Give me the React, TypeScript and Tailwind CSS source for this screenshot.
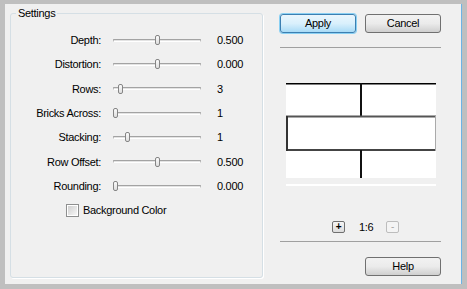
const FONT = "font-['Liberation_Sans',Arial,sans-serif] text-[11px] tracking-[-0.3px] text-black";

// pos = thumb centre, px from the track's left edge
const SETTINGS = [
  {label: 'Depth:', value: '0.500', pos: 44},
  {label: 'Distortion:', value: '0.000', pos: 44},
  {label: 'Rows:', value: '3', pos: 7},
  {label: 'Bricks Across:', value: '1', pos: 2},
  {label: 'Stacking:', value: '1', pos: 14},
  {label: 'Row Offset:', value: '0.500', pos: 44},
  {label: 'Rounding:', value: '0.000', pos: 2},
];

function Slider({pos}: {pos: number}) {
  return (
    <div className="relative w-[88px] h-[12px] flex items-center">
      <div className="w-full h-[3px] border-t border-[#a3a3a3] border-b border-b-[#ffffff] bg-[#e3e3e3] border-x border-x-[#b9b9b9]" />
      <div
        className="absolute top-[1px] w-[5px] h-[10px] rounded-[2px] border border-[#858585] bg-gradient-to-b from-[#fbfbfb] to-[#dedede]"
        style={{left: pos - 2}}
      />
    </div>
  );
}

function Button({label, primary}: {label: string; primary?: boolean}) {
  return (
    <button
      className={
        primary
          ? 'w-[76px] h-[19px] rounded-[3px] border border-[#3c7fb1] shadow-[0_0_0_1px_#8ad0f3] bg-gradient-to-b from-[#eaf6fd] via-[#d9f0fc] to-[#a9dbf6] leading-[17px] text-center'
          : 'w-[76px] h-[19px] rounded-[3px] border border-[#707070] bg-gradient-to-b from-[#f2f2f2] via-[#ebebeb] to-[#cfcfcf] leading-[17px] text-center'
      }
    >
      {label}
    </button>
  );
}

export default function App() {
  return (
    <div className={`w-[467px] h-[289px] bg-[#bfbfbf] pt-[4px] pl-[5px] ${FONT}`}>
      <div className="w-[457px] h-[280px] bg-[#f0f0f0] border-r border-[#6cb3e6] flex items-start">

        {/* ── Settings group ─────────────────────────── */}
        <fieldset className="ml-[5px] mt-[3px] w-[253px] h-[271px] border border-[#d5dfe5] rounded-[3px] shadow-[1px_1px_0_#ffffff]">
          <legend className="ml-[5px] px-[2px] leading-[12px]">Settings</legend>

          <div className="pt-[9px] flex flex-col">
            {SETTINGS.map((s) => (
              <div key={s.label} className="h-[24.33px] flex items-center">
                <span className="w-[90px] text-right">{s.label}</span>
                <div className="ml-[12px]">
                  <Slider pos={s.pos} />
                </div>
                <span className="ml-[16px]">{s.value}</span>
              </div>
            ))}
            <div className="h-[24px] flex items-center pl-[55px]">
              <span className="w-[13px] h-[13px] border border-[#8e8f8f] bg-white p-[1px]">
                <span className="block w-full h-full bg-gradient-to-br from-[#cfcfcf] to-[#f7f7f7]" />
              </span>
              <span className="ml-[4px]">Background Color</span>
            </div>
          </div>
        </fieldset>

        {/* ── Right column ───────────────────────────── */}
        <div className="ml-[17px] mt-[10px] w-[161px] flex flex-col">
          <div className="flex justify-between">
            <Button label="Apply" primary />
            <Button label="Cancel" />
          </div>

          <div className="mt-[14px] h-[1px] bg-[#a0a0a0]" />

          <svg className="mt-[35px] ml-[6px]" width="150" height="95" viewBox="0 0 150 95">
            <rect x="0" y="0" width="150" height="95" fill="#ffffff" />
            <line x1="0" y1="0.75" x2="150" y2="0.75" stroke="#000" strokeWidth="1.5" />
            <line x1="75" y1="0" x2="75" y2="33" stroke="#111" strokeWidth="2" />
            <line x1="0" y1="33.5" x2="150" y2="33.5" stroke="#555" strokeWidth="2" />
            <line x1="0" y1="67" x2="150" y2="67" stroke="#444" strokeWidth="2" />
            <line x1="1" y1="33" x2="1" y2="68" stroke="#333" strokeWidth="2" />
            <line x1="149.5" y1="33" x2="149.5" y2="68" stroke="#aaa" strokeWidth="1" />
            <line x1="75" y1="67" x2="75" y2="95" stroke="#111" strokeWidth="2" />
          </svg>
          <div className="mt-[6px] ml-[6px] w-[150px] h-[2px] bg-white" />

          <div className="mt-[35px] h-[12px] flex items-center pl-[52px]">
            <span className="w-[13px] h-[12px] rounded-[2px] border border-[#707070] bg-gradient-to-b from-[#f6f6f6] to-[#dcdcdc] flex items-center justify-center text-[10px] font-bold leading-none">+</span>
            <span className="ml-[14px] w-[27px] leading-[12px]">1:6</span>
            <span className="w-[13px] h-[12px] rounded-[2px] border border-[#bdbdbd] bg-[#f4f4f4] flex items-center justify-center text-[10px] text-[#a8a8a8] leading-none">-</span>
          </div>

          <div className="mt-[8px] h-[1px] bg-[#a0a0a0]" />

          <div className="mt-[15px] flex justify-end">
            <Button label="Help" />
          </div>
        </div>
      </div>
    </div>
  );
}
